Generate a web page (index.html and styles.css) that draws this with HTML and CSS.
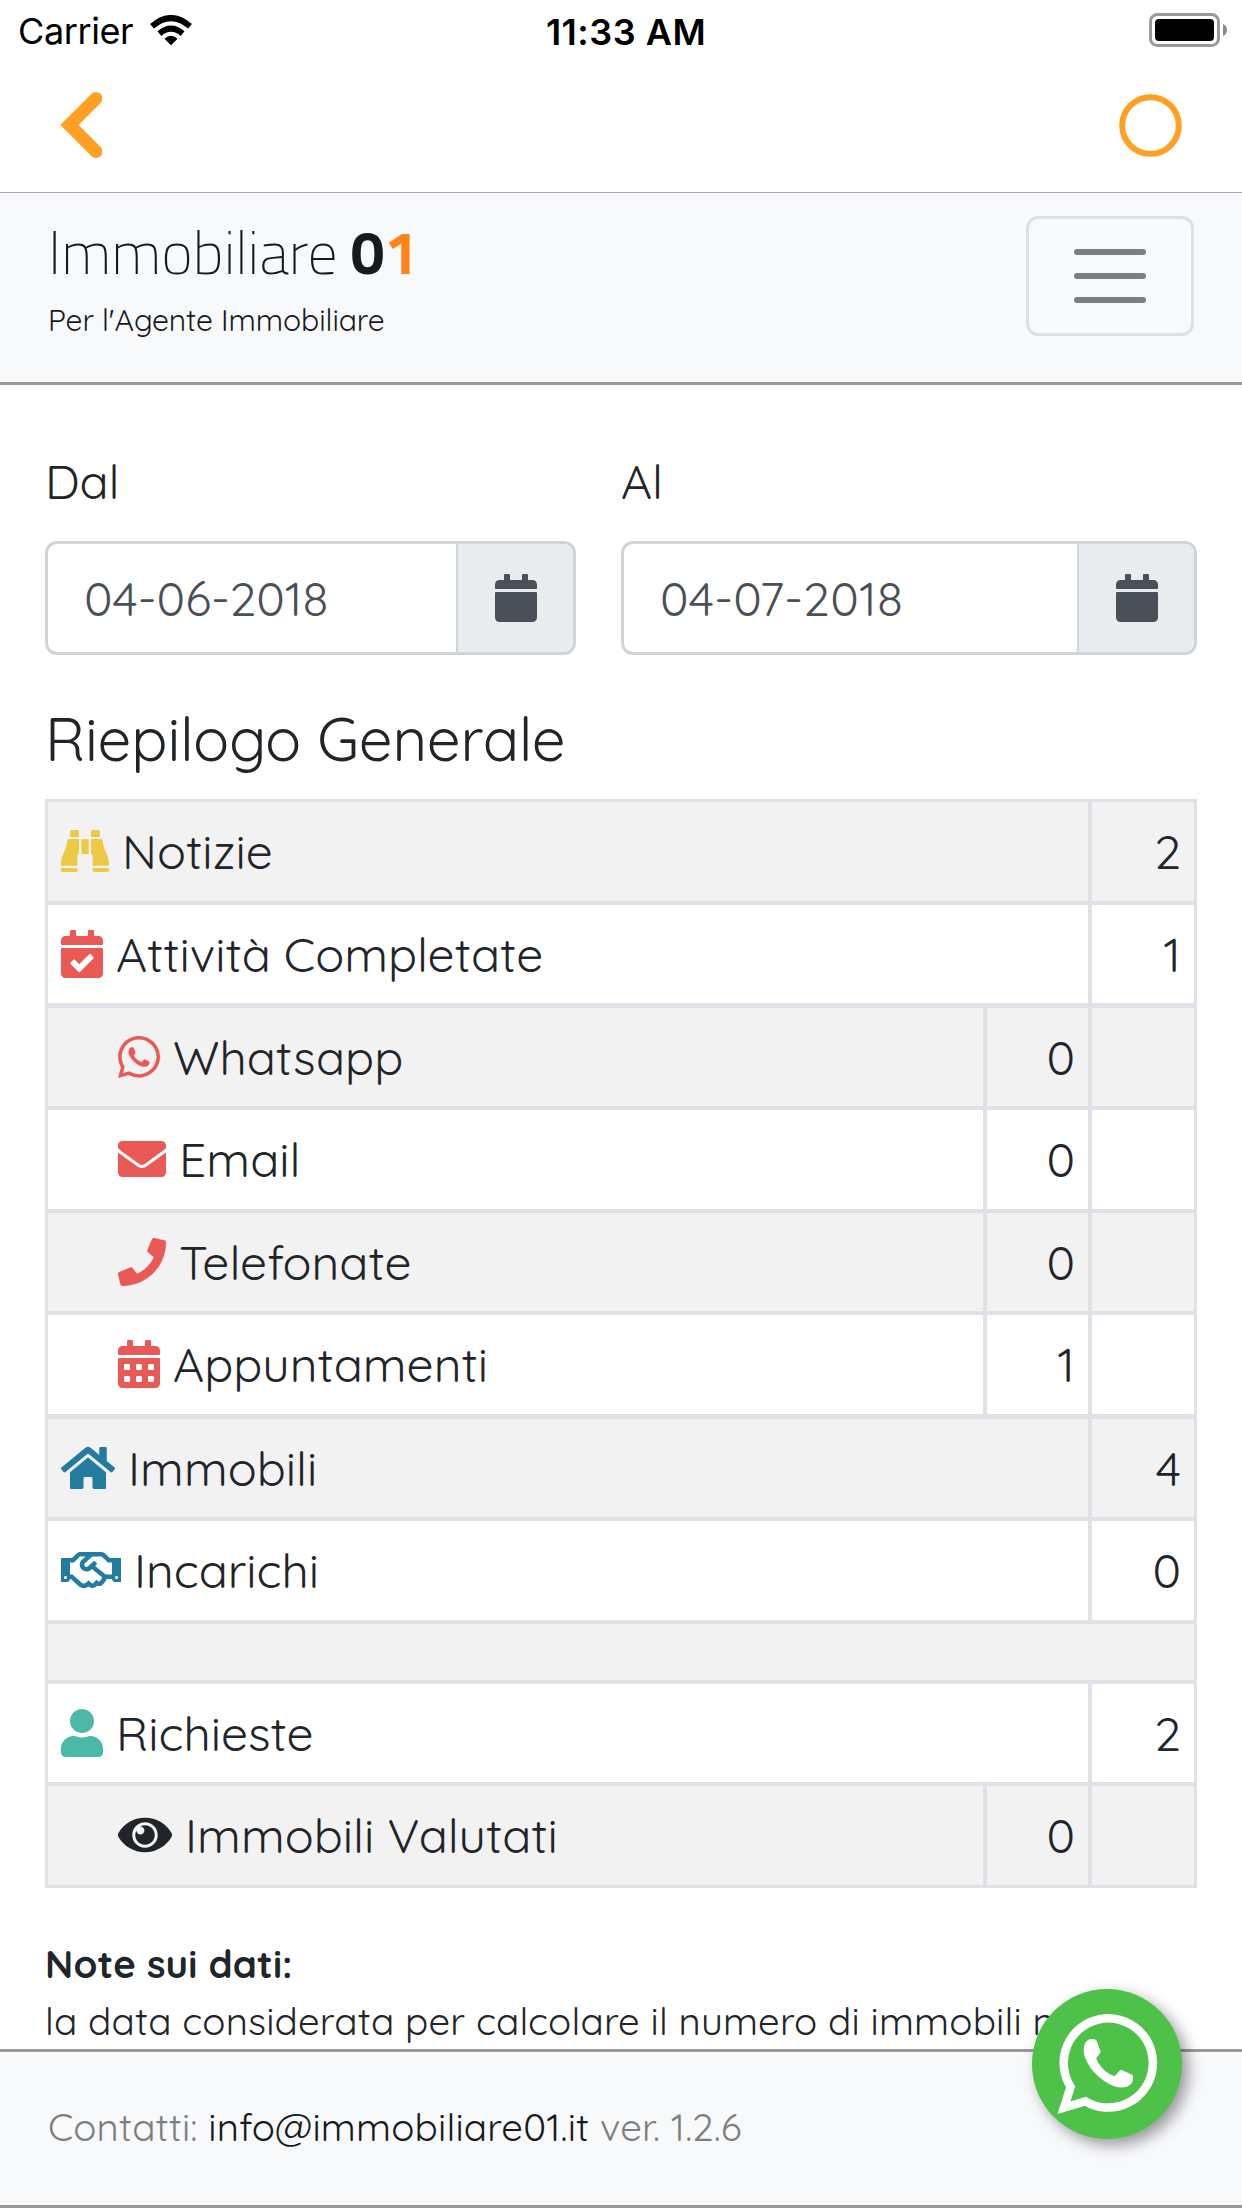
FILE: index.html
```html
<!DOCTYPE html>
<html lang="it">
<head>
<meta charset="utf-8">
<title>Immobiliare 01</title>
<link rel="stylesheet" href="styles.css">
</head>
<body>
<svg class="defs" aria-hidden="true">
  <symbol id="calendar" viewBox="0 0 448 512"><path d="M12 192h424c6.6 0 12 5.4 12 12v260c0 26.5-21.5 48-48 48H48c-26.5 0-48-21.5-48-48V204c0-6.6 5.4-12 12-12zm436-44v-36c0-26.5-21.5-48-48-48h-48V12c0-6.6-5.4-12-12-12h-40c-6.600 0-12 5.400-12 12v52H160V12c0-6.600-5.400-12-12-12h-40c-6.600 0-12 5.400-12 12v52H48C21.500 64 0 85.500 0 112v36c0 6.600 5.400 12 12 12h424c6.600 0 12-5.400 12-12z"/></symbol>
  <symbol id="whatsapp" viewBox="0 0 448 512"><path d="M380.9 97.1C339 55.1 283.2 32 223.9 32c-122.4 0-222 99.6-222 222 0 39.1 10.2 77.3 29.6 111L0 480l117.7-30.9c32.4 17.7 68.9 27 106.1 27h.1c122.3 0 224.1-99.6 224.1-222 0-59.3-25.2-115-67.1-157zm-157 341.6c-33.2 0-65.7-8.9-94-25.7l-6.7-4-69.8 18.3L72 359.2l-4.4-7c-18.5-29.4-28.2-63.3-28.2-98.2 0-101.7 82.8-184.5 184.6-184.5 49.3 0 95.6 19.2 130.4 54.1 34.8 34.9 56.2 81.2 56.1 130.5 0 101.8-84.9 184.6-186.6 184.6zm101.2-138.2c-5.5-2.8-32.8-16.2-37.9-18-5.1-1.9-8.8-2.8-12.5 2.8-3.7 5.6-14.3 18-17.6 21.8-3.2 3.7-6.5 4.2-12 1.4-32.6-16.3-54-29.1-75.5-66-5.7-9.8 5.7-9.1 16.3-30.3 1.8-3.7.9-6.9-.5-9.7-1.4-2.8-12.5-30.1-17.1-41.2-4.5-10.8-9.1-9.3-12.5-9.5-3.2-.2-6.9-.2-10.6-.2-3.7 0-9.7 1.4-14.8 6.9-5.1 5.6-19.4 19-19.4 46.3 0 27.3 19.9 53.7 22.6 57.4 2.8 3.7 39.1 59.7 94.8 83.8 35.2 15.2 49 16.5 66.6 13.9 10.7-1.6 32.8-13.4 37.4-26.4 4.6-13 4.6-24.1 3.2-26.4-1.3-2.5-5-3.9-10.5-6.6z"/></symbol>
</svg>

<header class="status">
  <div class="carrier"><span>Carrier</span>
    <svg width="42" height="31" viewBox="0 0 42 31"><g fill="none" stroke="#000" stroke-width="6"><path d="M2 11.300Q21-5.200 40 11.300"/><path d="M9.400 18.600Q21 8.800 32.600 18.600"/></g><path d="M14.500 23.700Q21 18 27.500 23.700L21 30.200z"/></svg>
  </div>
  <div class="time">11:33 AM</div>
  <svg class="battery" width="78" height="34" viewBox="0 0 78 34"><rect x="1.500" y="1.500" width="68" height="31" rx="7" fill="none" stroke="#999" stroke-width="3"/><rect x="6" y="6" width="59" height="22" rx="4"/><path d="M74 11a6.500 6.500 0 0 1 0 12z" fill="#8a8a8a"/></svg>
</header>

<nav class="appbar">
  <svg width="42" height="66" viewBox="0 0 42 66"><path d="M36 6.500L9.500 33L36 59.500" fill="none" stroke="#ffa023" stroke-width="13" stroke-linecap="round"/></svg>
  <svg width="63" height="63" viewBox="0 0 63 63"><circle cx="31.500" cy="31.500" r="28.300" fill="none" stroke="#ffa023" stroke-width="6"/></svg>
</nav>

<section class="brandbar">
  <div class="brand">
    <div class="logo">Immobiliare <b>0<i>1</i></b></div>
    <div class="tagline">Per l'Agente Immobiliare</div>
  </div>
  <button class="toggler" aria-label="Menu"><span></span><span></span><span></span></button>
</section>

<main class="content">
  <div class="dates">
    <div class="field from">
      <label>Dal</label>
      <div class="group"><div class="value">04-06-2018</div><div class="addon"><svg class="ic w448"><use href="#calendar"/></svg></div></div>
    </div>
    <div class="field to">
      <label>Al</label>
      <div class="group"><div class="value">04-07-2018</div><div class="addon"><svg class="ic w448"><use href="#calendar"/></svg></div></div>
    </div>
  </div>

  <h1>Riepilogo Generale</h1>

  <div class="grid">
    <div class="row odd"><div class="cell name"><svg class="ic w512 yellow" viewBox="0 0 512 512"><g id="half"><path d="M98 48a16 16 0 0 1 16-16h62a16 16 0 0 1 16 16v58H98zM66 145a16 16 0 0 1 16-16H192V288a18 18 0 0 0-17 18V414H0V390C4 275 64 260 66 145zM0 438H175V464a16 16 0 0 1-16 16H16a16 16 0 0 1-16-16z"/></g><use href="#half" transform="matrix(-1 0 0 1 512 0)"/><path d="M217 129h78v160h-78z"/></svg> Notizie</div><div class="cell num">2</div></div>
    <div class="row"><div class="cell name"><svg class="ic w448 red" viewBox="0 0 448 512"><path d="M436 160H12c-6.627 0-12-5.373-12-12v-36c0-26.510 21.490-48 48-48h48V12c0-6.627 5.373-12 12-12h40c6.627 0 12 5.373 12 12v52h128V12c0-6.627 5.373-12 12-12h40c6.627 0 12 5.373 12 12v52h48c26.510 0 48 21.490 48 48v36c0 6.627-5.373 12-12 12zM12 192h424c6.627 0 12 5.373 12 12v260c0 26.510-21.490 48-48 48H48c-26.510 0-48-21.490-48-48V204c0-6.627 5.373-12 12-12zm333.296 95.947l-28.169-28.398c-4.667-4.705-12.265-4.736-16.970-.068L194.120 364.665l-45.980-46.352c-4.667-4.705-12.266-4.736-16.971-.068l-28.397 28.170c-4.705 4.667-4.736 12.265-.068 16.970l82.601 83.269c4.667 4.705 12.265 4.736 16.970.068l142.953-141.805c4.705-4.667 4.736-12.265.068-16.970z"/></svg> Attività Completate</div><div class="cell num">1</div></div>
    <div class="row odd sub after-group"><div class="cell name"><svg class="ic w448 red"><use href="#whatsapp"/></svg> Whatsapp</div><div class="cell num">0</div><div class="cell"></div></div>
    <div class="row sub"><div class="cell name"><svg class="ic w512 red" viewBox="0 0 512 512"><path d="M502.300 190.800c3.900-3.100 9.700-.2 9.700 4.700V400c0 26.500-21.500 48-48 48H48c-26.500 0-48-21.500-48-48V195.600c0-5 5.700-7.800 9.700-4.700 22.400 17.400 52.100 39.500 154.100 113.600 21.100 15.400 56.700 47.800 92.200 47.600 35.700.3 72-32.800 92.300-47.600 102-74.100 131.600-96.300 154-113.700zM256 320c23.200.4 56.600-29.200 73.400-41.400 132.700-96.300 142.800-104.700 173.400-128.700 5.800-4.500 9.200-11.500 9.200-18.900v-19c0-26.500-21.500-48-48-48H48c-26.500 0-48 21.500-48 48v19c0 7.400 3.400 14.300 9.200 18.900 30.600 23.900 40.700 32.400 173.400 128.700 16.800 12.200 50.200 41.800 73.400 41.400z"/></svg> Email</div><div class="cell num">0</div><div class="cell"></div></div>
    <div class="row odd sub"><div class="cell name"><svg class="ic w512 red" viewBox="0 0 512 512"><path d="M493.400 24.600l-104-24c-11.300-2.600-22.900 3.300-27.500 13.900l-48 112c-4.200 9.800-1.400 21.300 6.900 28l60.600 49.600c-36 76.700-98.900 140.500-177.200 177.200l-49.600-60.600c-6.800-8.300-18.200-11.100-28-6.900l-112 48C3.900 366.500-2 378.100.6 389.400l24 104C27.100 504.200 36.700 512 48 512c256.100 0 464-207.500 464-464 0-11.200-7.700-20.900-18.600-23.400z"/></svg> Telefonate</div><div class="cell num">0</div><div class="cell"></div></div>
    <div class="row sub"><div class="cell name"><svg class="ic w448 red" viewBox="0 0 448 512"><path fill-rule="evenodd" d="M436 160H12a12 12 0 0 1-12-12v-36a48 48 0 0 1 48-48h48V12a12 12 0 0 1 12-12h40a12 12 0 0 1 12 12v52h128V12a12 12 0 0 1 12-12h40a12 12 0 0 1 12 12v52h48a48 48 0 0 1 48 48v36a12 12 0 0 1-12 12zM12 192h424a12 12 0 0 1 12 12v260a48 48 0 0 1-48 48H48a48 48 0 0 1-48-48V204a12 12 0 0 1 12-12zM76 256h40a12 12 0 0 1 12 12v40a12 12 0 0 1-12 12H76a12 12 0 0 1-12-12v-40a12 12 0 0 1 12-12zm128 0h40a12 12 0 0 1 12 12v40a12 12 0 0 1-12 12h-40a12 12 0 0 1-12-12v-40a12 12 0 0 1 12-12zm128 0h40a12 12 0 0 1 12 12v40a12 12 0 0 1-12 12h-40a12 12 0 0 1-12-12v-40a12 12 0 0 1 12-12zM76 384h40a12 12 0 0 1 12 12v40a12 12 0 0 1-12 12H76a12 12 0 0 1-12-12v-40a12 12 0 0 1 12-12zm128 0h40a12 12 0 0 1 12 12v40a12 12 0 0 1-12 12h-40a12 12 0 0 1-12-12v-40a12 12 0 0 1 12-12zm128 0h40a12 12 0 0 1 12 12v40a12 12 0 0 1-12 12h-40a12 12 0 0 1-12-12v-40a12 12 0 0 1 12-12z"/></svg> Appuntamenti</div><div class="cell num">1</div><div class="cell"></div></div>
    <div class="row odd after-group"><div class="cell name"><svg class="ic w576 blue" viewBox="0 0 576 512"><path d="M280.370 148.260L96 300.110V464a16 16 0 0 0 16 16l112.060-.29a16 16 0 0 0 15.920-16V368a16 16 0 0 1 16-16h64a16 16 0 0 1 16 16v95.640a16 16 0 0 0 16 16.050L464 480a16 16 0 0 0 16-16V300L295.670 148.260a12.190 12.190 0 0 0-15.300 0zM571.600 251.470L488 182.560V44.050a12 12 0 0 0-12-12h-56a12 12 0 0 0-12 12v72.610L318.470 43a48 48 0 0 0-61 0L4.340 251.470a12 12 0 0 0-1.600 16.900l25.500 31A12 12 0 0 0 45.150 301l235.220-193.740a12.190 12.190 0 0 1 15.300 0L530.900 301a12 12 0 0 0 16.900-1.600l25.500-31a12 12 0 0 0-1.700-16.930z"/></svg> Immobili</div><div class="cell num">4</div></div>
    <div class="row"><div class="cell name"><svg class="ic w640 blue" viewBox="0 0 640 512"><path d="M519.200 127.900l-47.600-47.600A56.252 56.252 0 0 0 432 64H205.200c-14.800 0-29.100 5.900-39.600 16.300L118 127.900H0v255.700h64c17.600 0 31.800-14.200 31.900-31.700h9.100l84.600 76.400c30.900 25.100 73.800 25.700 105.600 3.800 12.500 10.800 26 15.900 41.100 15.900 18.200 0 35.300-7.400 48.800-24 22.100 8.700 48.200 2.600 64-16.800l26.200-32.300c5.600-6.900 9.100-14.800 10.900-23h57.900c.1 17.500 14.400 31.700 31.900 31.700h64V127.900H519.200zM48 351.600c-8.800 0-16-7.200-16-16s7.200-16 16-16 16 7.200 16 16c0 8.900-7.200 16-16 16zm390-6.900l-26.100 32.200c-2.800 3.400-7.800 4-11.300 1.200l-23.900-19.400-30 36.500c-6 7.300-15 4.800-18 2.400l-36.800-31.500-15.600 19.200c-13.900 17.100-39.200 19.700-55.300 6.600l-97.300-88H96V175.800h41.900l61.700-61.600c2-.8 3.700-1.500 5.700-2.300H262l-38.700 35.500c-29.400 26.900-31.100 72.300-4.400 101.300 14.800 16.200 61.200 41.200 101.500 4.400l8.200-7.500 108.200 87.800c3.400 2.800 3.900 7.900 1.200 11.300zm106-40.800h-69.200c-2.300-2.800-4.900-5.400-7.700-7.700l-102.700-83.400 12.500-11.400c6.500-6 7-16.100 1-22.600L367 167.100c-6-6.500-16.100-6.900-22.600-1l-55.200 50.600c-9.500 8.700-25.700 9.400-34.600 0-9.300-9.900-8.500-25.100 1.200-33.900l65.600-60.200c7.400-6.800 17-10.500 27-10.500l83.700-.2c2.100 0 4.100.8 5.500 2.300l61.700 61.600H544v128zm48 47.700c-8.800 0-16-7.200-16-16s7.200-16 16-16 16 7.200 16 16c0 8.900-7.200 16-16 16z"/></svg> Incarichi</div><div class="cell num">0</div></div>
    <div class="row odd spacer"><div class="cell"></div></div>
    <div class="row"><div class="cell name"><svg class="ic w448 green" viewBox="0 0 448 512"><path d="M224 256c70.700 0 128-57.300 128-128S294.700 0 224 0 96 57.300 96 128s57.300 128 128 128zm89.600 32h-16.700c-22.200 10.200-46.900 16-72.900 16s-50.600-5.800-72.900-16h-16.700C60.200 288 0 348.200 0 422.400V464c0 26.500 21.500 48 48 48h352c26.500 0 48-21.500 48-48v-41.600c0-74.200-60.200-134.400-134.400-134.400z"/></svg> Richieste</div><div class="cell num">2</div></div>
    <div class="row odd sub"><div class="cell name"><svg class="ic w576" viewBox="0 0 576 512"><path d="M569.354 231.631C512.969 135.949 407.810 72 288 72 168.140 72 63.004 135.994 6.646 231.631a47.999 47.999 0 0 0 0 48.739C63.031 376.051 168.190 440 288 440c119.860 0 224.996-63.994 281.354-159.631a47.997 47.997 0 0 0 0-48.738zM288 392c-75.162 0-136-60.827-136-136 0-75.162 60.826-136 136-136 75.162 0 136 60.826 136 136 0 75.162-60.826 136-136 136zm104-136c0 57.438-46.562 104-104 104s-104-46.562-104-104c0-17.708 4.431-34.379 12.236-48.973l-.001.032c0 23.651 19.173 42.823 42.824 42.823s42.824-19.173 42.824-42.823c0-23.651-19.173-42.824-42.824-42.824l-.032.001C253.621 156.431 270.292 152 288 152c57.438 0 104 46.562 104 104z"/></svg> Immobili Valutati</div><div class="cell num">0</div><div class="cell"></div></div>
  </div>

  <div class="notes"><strong>Note sui dati:</strong><br>la data considerata per calcolare il numero di immobili n</div>
</main>

<footer class="footer">Contatti:&nbsp;<a>info@immobiliare01.it</a>&nbsp;ver. 1.2.6</footer>

<a class="fab" aria-label="WhatsApp">
  <svg width="150" height="150" viewBox="0 0 150 150"><path d="M38.600 97.800A44.600 44.600 0 1 1 53.500 112.300L32 118.700z" fill="none" stroke="#fff" stroke-width="8.500"/><path d="M55.500 51.500C58 49.500 63.500 49.600 64.700 52L68.600 62.500C69 64.200 64.200 68 64.300 70C68 78 74 84 82 87C84 86.500 87.500 81 89.200 80.700L100 85.700C101.800 87 101.400 92.500 99 95C95 99 88.500 99.300 83 97.500C68 92 57 80 52.500 67C51 61 51.500 54.500 55.500 51.500z" fill="#fff"/></svg>
</a>
</body>
</html>
```
FILE: styles.css
```css
* { box-sizing: border-box; }
body {
  margin: 0;
  height: 2208px;
  overflow: hidden;
  display: flex;
  flex-direction: column;
  position: relative;
  background: #fff;
  color: #212529;
  font: 400 48px/72px Quicksand, Lato, sans-serif;
}
svg { display: block; }
.defs { position: absolute; width: 0; height: 0; }

.status {
  flex: none;
  height: 60px;
  display: grid;
  grid-template-columns: 1fr auto 1fr;
  align-items: start;
  padding: 0 15px 0 18px;
  color: #000;
  font: 400 36px/44px Inter, sans-serif;
}
.carrier { display: flex; padding-top: 9px; letter-spacing: -.4px; }
.carrier span { width: 132px; }
.carrier svg { margin-top: 6px; }
.time { padding: 10px 0 0 7px; font-weight: 600; letter-spacing: .5px; }
.battery { justify-self: end; margin-top: 13px; }

.appbar {
  flex: none;
  height: 133px;
  padding: 32px 60px 0;
  display: flex;
  justify-content: space-between;
  border-bottom: 1px solid #a9a9ab;
}
.appbar svg:last-child { margin-top: 2px; }

.brandbar {
  flex: none;
  height: 192px;
  padding: 23px 48px 0;
  display: flex;
  justify-content: space-between;
  background: #f8f9fb;
  border-bottom: 3px solid #999;
  color: #17191b;
}
.logo { font: 200 60px/72px "Titillium Web", "Open Sans", sans-serif; }
.logo b { font-weight: 700; }
.logo i { font-style: normal; color: #ff8316; }
.tagline { font-size: 30px; line-height: 45px; margin-top: 10px; letter-spacing: -.07px; }
.toggler {
  width: 168px;
  height: 120px;
  padding: 0;
  display: flex;
  flex-direction: column;
  align-items: center;
  justify-content: center;
  gap: 18px;
  background: none;
  border: 3px solid #dfe0e2;
  border-radius: 12px;
}
.toggler span { width: 72px; height: 6px; border-radius: 3px; background: #7d7e7f; }

.content { flex: 1; min-height: 0; overflow: hidden; padding: 60px 45px 0; }
.dates { display: flex; gap: 45px; }
.from { width: 531px; }
.to { width: 576px; }
.to .value { letter-spacing: .25px; }
label { display: block; margin-bottom: 24px; }
.group {
  height: 114px;
  display: flex;
  border: 3px solid #ced4da;
  border-radius: 12px;
  overflow: hidden;
  color: #495057;
}
.value { flex: 1; padding: 18px 36px; }
.addon {
  width: 117px;
  display: flex;
  align-items: center;
  justify-content: center;
  background: #e9ecef;
  border-left: 2px solid #ced4da;
}

h1 { margin: 48px 0 24px; font-size: 60px; line-height: 72px; font-weight: 400; letter-spacing: -.22px; }

.grid { padding: 3px; background: #dee2e6; display: flex; flex-direction: column; gap: 4px; }
.row { height: 98.600px; display: grid; grid-template-columns: 1fr 102px; gap: 4px; }
.row.sub { grid-template-columns: 1fr 101px 102px; }
.row.spacer { height: 56px; grid-template-columns: 1fr; }
.row.after-group { margin-top: .5px; }
.cell { background: #fff; padding: 13px; }
.odd .cell { background: #f2f2f2; }
.sub .name { padding-left: 70px; }
.num { text-align: right; }

.ic { display: inline-block; height: 48px; vertical-align: -6px; fill: currentColor; }
.w448 { width: 42px; }
.w512 { width: 48px; }
.w576 { width: 54px; }
.w640 { width: 60px; }
.yellow { color: #edc945; }
.red { color: #e95a56; }
.blue { color: #237ba0; }
.green { color: #4cb9a8; }

.notes { margin-top: 48px; font-size: 38.400px; line-height: 57px; letter-spacing: .17px; white-space: nowrap; }
.notes strong { font-weight: 700; }

.footer {
  flex: none;
  height: 159px;
  padding: 0 48px 3px;
  display: flex;
  align-items: center;
  background: #f8f9fb;
  border-top: 3px solid #999;
  border-bottom: 3px solid #999;
  color: #7d7e7f;
  font-size: 38.400px;
  letter-spacing: .17px;
}
.footer a { color: #17191b; }

.fab {
  position: absolute;
  left: 1032px;
  top: 1989px;
  width: 150px;
  height: 150px;
  border-radius: 50%;
  background: #4ec248;
  box-shadow: 6px 6px 15px rgba(0, 0, 0, .4);
}
```
